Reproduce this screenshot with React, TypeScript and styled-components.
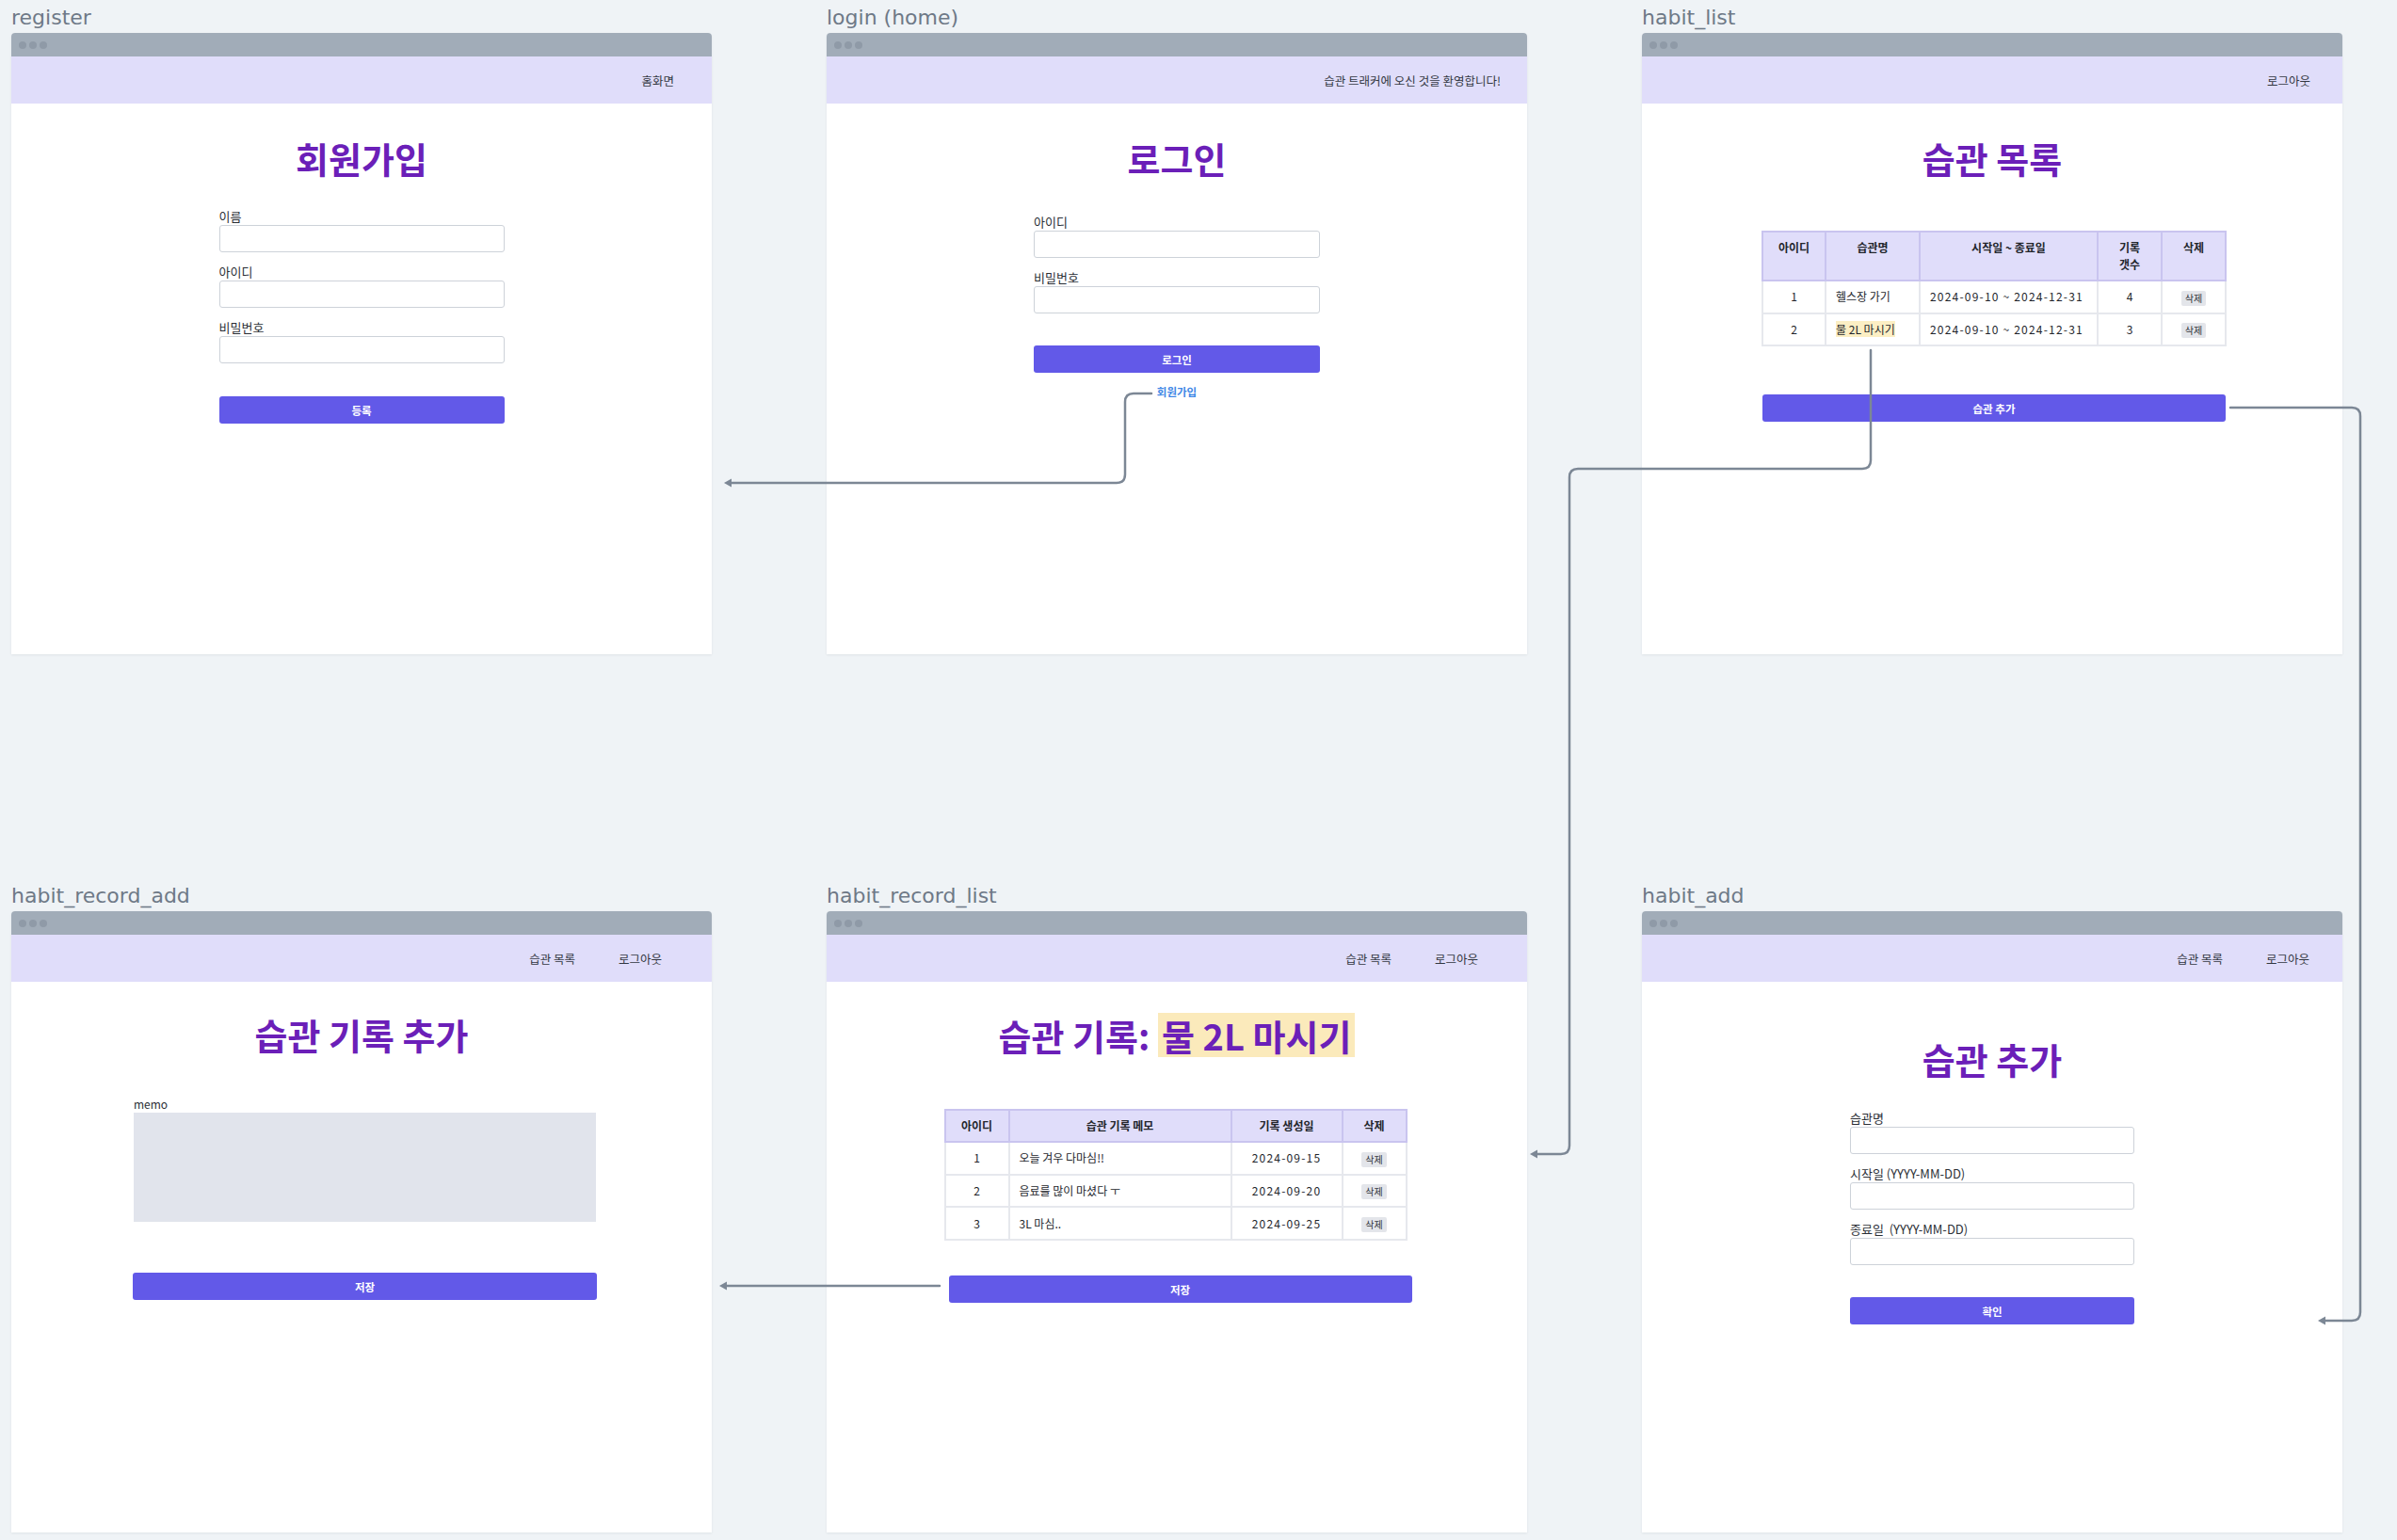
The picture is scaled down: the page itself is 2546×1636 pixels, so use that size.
import React from "react";
import styled, { createGlobalStyle } from "styled-components";

const GlobalStyle = createGlobalStyle`
  html, body { margin: 0; padding: 0; background: #eff3f6; }
  body { font-family: "Noto Sans CJK KR", "Noto Sans", sans-serif; }
  * { box-sizing: border-box; }
`;

const Canvas = styled.div`
  position: relative;
  width: 2546px;
  height: 1636px;
  padding: 8px 0 0 12px;
  display: grid;
  grid-template-columns: repeat(3, 744px);
  grid-auto-rows: 687px;
  column-gap: 122px;
  row-gap: 246px;
  align-content: start;
  background: #eff3f6;
  overflow: hidden;
`;

const Screen = styled.section`
  display: flex;
  flex-direction: column;
`;

const ScreenLabel = styled.div`
  height: 27px;
  font-family: "DejaVu Sans", sans-serif;
  font-size: 22px;
  line-height: 22px;
  color: #6e7987;
  white-space: nowrap;
`;

const Frame = styled.div`
  height: 660px;
  background: #ffffff;
  border-radius: 4px 4px 0 0;
  box-shadow: 0 1px 3px rgba(15, 23, 42, 0.07);
  display: flex;
  flex-direction: column;
  overflow: hidden;
`;

const TitleBar = styled.div`
  height: 25px;
  background: #a1acb8;
  display: flex;
  align-items: center;
  gap: 3px;
  padding-left: 8px;
  flex-shrink: 0;
`;

const Dot = styled.span`
  width: 8px;
  height: 8px;
  border-radius: 50%;
  background: #8f9aa7;
`;

const NavBar = styled.nav<{ $padRight: number }>`
  height: 50px;
  flex-shrink: 0;
  background: #e0ddfa;
  display: flex;
  justify-content: flex-end;
  align-items: center;
  gap: 46px;
  padding-right: ${(p) => p.$padRight}px;
`;

const NavLink = styled.span`
  font-size: 12.5px;
  color: #333842;
  white-space: nowrap;
`;

const Body = styled.main<{ $padTop: number }>`
  flex: 1;
  display: flex;
  flex-direction: column;
  align-items: center;
  padding-top: ${(p) => p.$padTop}px;
`;

const Heading = styled.h1`
  margin: 0;
  font-size: 38px;
  line-height: 46px;
  font-weight: 700;
  color: #6b1fb8;
  white-space: nowrap;
`;

const Highlight = styled.span`
  display: inline-block;
  line-height: 47px;
  padding: 0 4px;
  background: #fbeabb;
`;

const Form = styled.div<{ $top: number; $width: number; $shift?: number }>`
  display: flex;
  flex-direction: column;
  width: ${(p) => p.$width}px;
  margin-top: ${(p) => p.$top}px;
  margin-left: ${(p) => p.$shift ?? 0}px;
`;

const Fields = styled.div`
  display: flex;
  flex-direction: column;
  gap: 13px;
`;

const Field = styled.label`
  display: flex;
  flex-direction: column;
  gap: 1px;
`;

const FieldLabel = styled.span`
  font-size: 13px;
  line-height: 16px;
  color: #2b2f36;
  white-space: pre;
`;

const TextInput = styled.input`
  height: 29px;
  width: 100%;
  border: 1.5px solid #cdd2d9;
  border-radius: 3px;
  background: #fff;
  outline: none;
`;

const MemoLabel = styled.span`
  font-size: 12px;
  line-height: 15px;
  color: #2b2f36;
  margin-bottom: 2px;
`;

const MemoArea = styled.textarea`
  height: 116px;
  width: 100%;
  border: none;
  background: #e1e4ec;
  resize: none;
  outline: none;
`;

const PrimaryButton = styled.button<{ $top: number; $width: number; $shift?: number }>`
  width: ${(p) => p.$width}px;
  height: 29px;
  margin-top: ${(p) => p.$top}px;
  margin-left: ${(p) => p.$shift ?? 0}px;
  border: none;
  border-radius: 3px;
  background: #6259e8;
  color: #fff;
  font-family: inherit;
  font-size: 11.5px;
  font-weight: 700;
  flex-shrink: 0;
`;

const TextLink = styled.a`
  margin-top: 13px;
  font-size: 11.5px;
  line-height: 15px;
  font-weight: 700;
  color: #3f88e6;
  text-decoration: none;
`;

const Table = styled.table<{ $width: number; $top: number; $shift?: number }>`
  width: ${(p) => p.$width}px;
  margin-top: ${(p) => p.$top}px;
  margin-left: ${(p) => p.$shift ?? 0}px;
  border-collapse: collapse;
  table-layout: fixed;
  font-size: 12px;
  color: #23262c;
`;

const Col = styled.col<{ $w: number }>`
  width: ${(p) => p.$w}px;
`;

const Th = styled.th`
  background: #e0ddfa;
  border: 2px solid #c9c4ef;
  padding: 7px 10px;
  line-height: 18px;
  font-weight: 700;
  vertical-align: top;
  text-align: center;
  white-space: nowrap;
`;

const Td = styled.td<{ $align?: "left" | "center"; $num?: boolean }>`
  border: 2px solid #e6e8ed;
  padding: 7px 10px;
  line-height: 18px;
  text-align: ${(p) => p.$align ?? "center"};
  letter-spacing: ${(p) => (p.$num ? "1.2px" : "0")};
  white-space: nowrap;
  overflow: hidden;
`;

const NameMark = styled.span`
  background: #fcefc4;
`;

const DeleteButton = styled.button`
  border: none;
  border-radius: 2px;
  background: #e3e5ea;
  color: #30343b;
  font-family: inherit;
  font-size: 10px;
  line-height: 14px;
  padding: 1px 4px;
  vertical-align: middle;
`;

const Overlay = styled.svg`
  position: absolute;
  left: 0;
  top: 0;
  pointer-events: none;
`;

const Chrome: React.FC<{ padRight: number; links: string[] }> = ({ padRight, links }) => (
  <>
    <TitleBar>
      <Dot />
      <Dot />
      <Dot />
    </TitleBar>
    <NavBar $padRight={padRight}>
      {links.map((l) => (
        <NavLink key={l}>{l}</NavLink>
      ))}
    </NavBar>
  </>
);

const InputField: React.FC<{ label: string }> = ({ label }) => (
  <Field>
    <FieldLabel>{label}</FieldLabel>
    <TextInput />
  </Field>
);

const STROKE = "#7c8795";

const arrowHead = (x: number, y: number) => `M ${x} ${y} l 8 -4.5 l 0 9 z`;

const Connectors: React.FC = () => (
  <Overlay width={2546} height={1636} viewBox="0 0 2546 1636">
    <g fill="none" stroke={STROKE} strokeWidth={2.5} strokeLinecap="round" strokeLinejoin="round">
      <path d="M 1223 418 H 1204 Q 1195 418 1195 427 V 504 Q 1195 513 1186 513 H 776" />
      <path d="M 1987 372 V 489 Q 1987 498 1978 498 H 1676 Q 1667 498 1667 507 V 1217 Q 1667 1226 1658 1226 H 1632" />
      <path d="M 2369 433 H 2498 Q 2507 433 2507 442 V 1394 Q 2507 1403 2498 1403 H 2469" />
      <path d="M 998 1366 H 771" />
    </g>
    <g fill={STROKE}>
      <path d={arrowHead(769, 513)} />
      <path d={arrowHead(1625, 1226)} />
      <path d={arrowHead(2462, 1403)} />
      <path d={arrowHead(764, 1366)} />
    </g>
  </Overlay>
);

const habits = [
  { id: 1, name: "헬스장 가기", range: "2024-09-10 ~ 2024-12-31", count: 4, mark: false },
  { id: 2, name: "물 2L 마시기", range: "2024-09-10 ~ 2024-12-31", count: 3, mark: true },
];

const records = [
  { id: 1, memo: "오늘 겨우 다마심!!", date: "2024-09-15" },
  { id: 2, memo: "음료를 많이 마셨다 ㅜ", date: "2024-09-20" },
  { id: 3, memo: "3L 마심..", date: "2024-09-25" },
];

export default function App() {
  return (
    <>
      <GlobalStyle />
      <Canvas>
        <Screen>
          <ScreenLabel>register</ScreenLabel>
          <Frame>
            <Chrome padRight={40} links={["홈화면"]} />
            <Body $padTop={35}>
              <Heading>회원가입</Heading>
              <Form $top={31} $width={303}>
                <Fields>
                  <InputField label="이름" />
                  <InputField label="아이디" />
                  <InputField label="비밀번호" />
                </Fields>
              </Form>
              <PrimaryButton $top={35} $width={303}>등록</PrimaryButton>
            </Body>
          </Frame>
        </Screen>

        <Screen>
          <ScreenLabel>login (home)</ScreenLabel>
          <Frame>
            <Chrome padRight={28} links={["습관 트래커에 오신 것을 환영합니다!"]} />
            <Body $padTop={35}>
              <Heading>로그인</Heading>
              <Form $top={37} $width={304}>
                <Fields>
                  <InputField label="아이디" />
                  <InputField label="비밀번호" />
                </Fields>
              </Form>
              <PrimaryButton $top={34} $width={304}>로그인</PrimaryButton>
              <TextLink>회원가입</TextLink>
            </Body>
          </Frame>
        </Screen>

        <Screen>
          <ScreenLabel>habit_list</ScreenLabel>
          <Frame>
            <Chrome padRight={34} links={["로그아웃"]} />
            <Body $padTop={35}>
              <Heading>습관 목록</Heading>
              <Table $width={492} $top={54} $shift={4}>
                <colgroup>
                  <Col $w={67} />
                  <Col $w={100} />
                  <Col $w={189} />
                  <Col $w={68} />
                  <Col $w={68} />
                </colgroup>
                <thead>
                  <tr>
                    <Th>아이디</Th>
                    <Th>습관명</Th>
                    <Th>시작일 ~ 종료일</Th>
                    <Th>
                      기록
                      <br />
                      갯수
                    </Th>
                    <Th>삭제</Th>
                  </tr>
                </thead>
                <tbody>
                  {habits.map((h) => (
                    <tr key={h.id}>
                      <Td>{h.id}</Td>
                      <Td $align="left">{h.mark ? <NameMark>{h.name}</NameMark> : h.name}</Td>
                      <Td $align="left" $num>{h.range}</Td>
                      <Td>{h.count}</Td>
                      <Td>
                        <DeleteButton>삭제</DeleteButton>
                      </Td>
                    </tr>
                  ))}
                </tbody>
              </Table>
              <PrimaryButton $top={51} $width={492} $shift={4}>습관 추가</PrimaryButton>
            </Body>
          </Frame>
        </Screen>

        <Screen>
          <ScreenLabel>habit_record_add</ScreenLabel>
          <Frame>
            <Chrome padRight={53} links={["습관 목록", "로그아웃"]} />
            <Body $padTop={33}>
              <Heading>습관 기록 추가</Heading>
              <Form $top={43} $width={491} $shift={7}>
                <MemoLabel>memo</MemoLabel>
                <MemoArea />
              </Form>
              <PrimaryButton $top={54} $width={493} $shift={7}>저장</PrimaryButton>
            </Body>
          </Frame>
        </Screen>

        <Screen>
          <ScreenLabel>habit_record_list</ScreenLabel>
          <Frame>
            <Chrome padRight={52} links={["습관 목록", "로그아웃"]} />
            <Body $padTop={33}>
              <Heading>
                습관 기록: <Highlight>물 2L 마시기</Highlight>
              </Heading>
              <Table $width={490} $top={55} $shift={-3}>
                <colgroup>
                  <Col $w={68} />
                  <Col $w={236} />
                  <Col $w={118} />
                  <Col $w={68} />
                </colgroup>
                <thead>
                  <tr>
                    <Th>아이디</Th>
                    <Th>습관 기록 메모</Th>
                    <Th>기록 생성일</Th>
                    <Th>삭제</Th>
                  </tr>
                </thead>
                <tbody>
                  {records.map((r) => (
                    <tr key={r.id}>
                      <Td>{r.id}</Td>
                      <Td $align="left">{r.memo}</Td>
                      <Td $num>{r.date}</Td>
                      <Td>
                        <DeleteButton>삭제</DeleteButton>
                      </Td>
                    </tr>
                  ))}
                </tbody>
              </Table>
              <PrimaryButton $top={37} $width={492} $shift={7}>저장</PrimaryButton>
            </Body>
          </Frame>
        </Screen>

        <Screen>
          <ScreenLabel>habit_add</ScreenLabel>
          <Frame>
            <Chrome padRight={35} links={["습관 목록", "로그아웃"]} />
            <Body $padTop={59}>
              <Heading>습관 추가</Heading>
              <Form $top={32} $width={302}>
                <Fields>
                  <InputField label="습관명" />
                  <InputField label="시작일 (YYYY-MM-DD)" />
                  <InputField label={"종료일\u00A0 (YYYY-MM-DD)"} />
                </Fields>
              </Form>
              <PrimaryButton $top={34} $width={302}>확인</PrimaryButton>
            </Body>
          </Frame>
        </Screen>

        <Connectors />
      </Canvas>
    </>
  );
}
